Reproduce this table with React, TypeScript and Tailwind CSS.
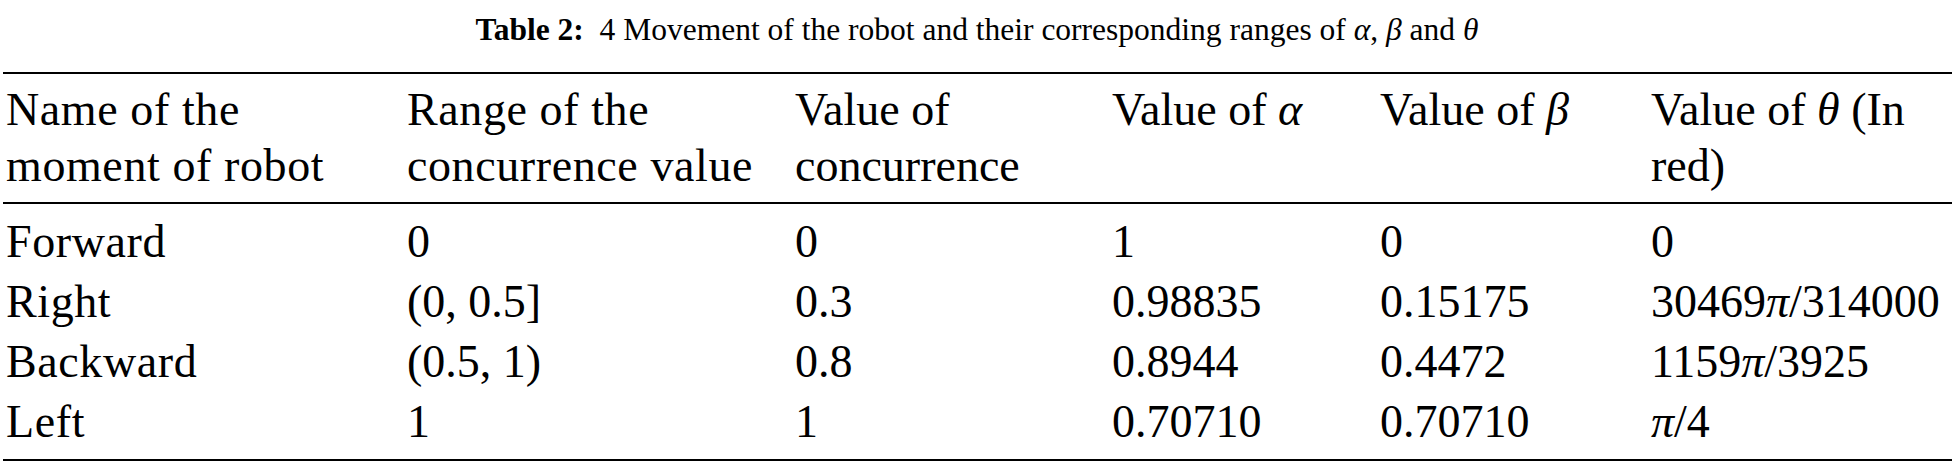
import React from "react";

const G = ({ c }: { c: string }) => <i>{c}</i>;

const rows: React.ReactNode[][] = [
  ["Forward", "0", "0", "1", "0", "0"],
  ["Right", "(0, 0.5]", "0.3", "0.98835", "0.15175", <>30469<G c="π" />/314000</>],
  ["Backward", "(0.5, 1)", "0.8", "0.8944", "0.4472", <>1159<G c="π" />/3925</>],
  ["Left", "1", "1", "0.70710", "0.70710", <><G c="π" />/4</>],
];

const header: React.ReactNode[] = [
  <>Name of the<br />moment of robot</>,
  <>Range of the<br />concurrence value</>,
  <>Value of<br />concurrence</>,
  <>Value of <G c="α" /></>,
  <>Value of <G c="β" /></>,
  <>Value of <G c="θ" /> (In<br />red)</>,
];

const cols = "grid grid-cols-[401px_388px_317px_268px_271px_1fr] pl-[3px]";

export default function App() {
  return (
    <div className="w-[1954px] h-[467px] bg-white text-black font-['Liberation_Serif',_'Times_New_Roman',_serif]">
      <div className="pt-[10px] text-center text-[31.5px] leading-[40px] whitespace-nowrap">
        <b>Table 2:</b>&nbsp; 4 Movement of the robot and their corresponding ranges of <G c="α" />, <G c="β" /> and <G c="θ" />
      </div>
      <div className="ml-[3px] mr-[2px] mt-[22px]">
        <div className="h-[2px] bg-black" />
        <div className={`${cols} pt-[8px] pb-[8px] text-[46px] leading-[56px] whitespace-nowrap`}>
          {header.map((h, i) => (
            <div key={i} className={i < 2 ? "tracking-[0.6px]" : ""}>{h}</div>
          ))}
        </div>
        <div className="h-[2px] bg-black" />
        <div className="pt-[8px] pb-[7px] text-[46px] leading-[60px] whitespace-nowrap">
          {rows.map((r, i) => (
            <div key={i} className={cols}>
              {r.map((c, j) => (
                <div key={j} className={j === 0 ? "tracking-[0.6px]" : ""}>{c}</div>
              ))}
            </div>
          ))}
        </div>
        <div className="h-[2px] bg-black" />
      </div>
    </div>
  );
}
